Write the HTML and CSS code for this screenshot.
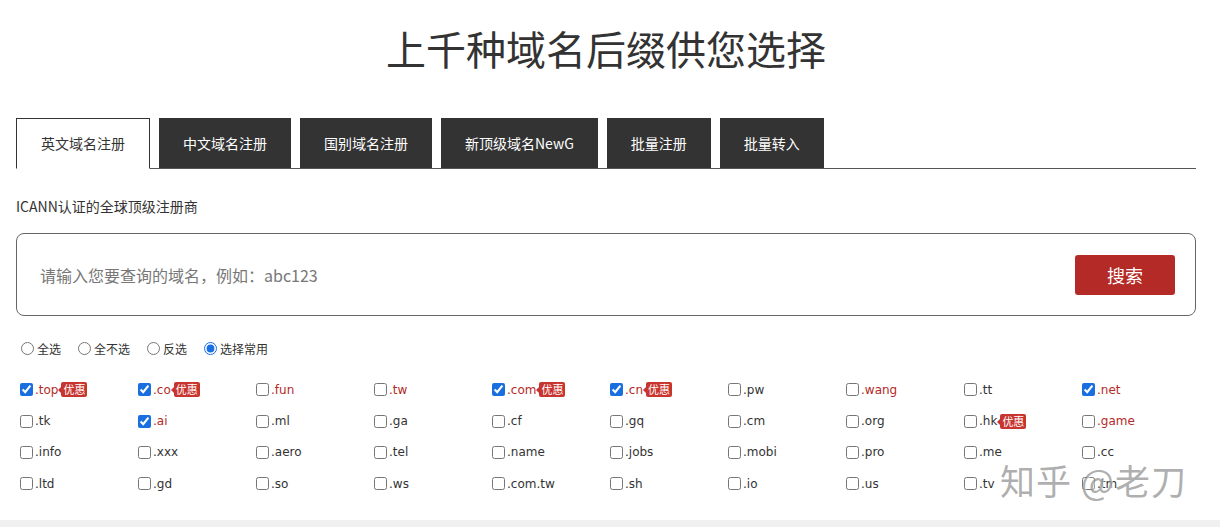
FILE: index.html
```html
<!DOCTYPE html>
<html>

<head>
    <title>域名注册</title>
    <link rel="stylesheet" href="styles.css">
</head>

<body>
    <div class="page">
        <h1 class="title">上千种域名后缀供您选择</h1>

        <ul class="tabs">
            <li class="tab active">英文域名注册</li>
            <li class="tab">中文域名注册</li>
            <li class="tab">国别域名注册</li>
            <li class="tab">新顶级域名NewG</li>
            <li class="tab">批量注册</li>
            <li class="tab">批量转入</li>
        </ul>

        <p class="note">ICANN认证的全球顶级注册商</p>

        <div class="search">
            <input type="text" class="search-input" placeholder="请输入您要查询的域名，例如：abc123">
            <button class="search-btn">搜索</button>
        </div>

        <div class="radios">
            <label><input type="radio" name="pick">全选</label>
            <label><input type="radio" name="pick">全不选</label>
            <label><input type="radio" name="pick">反选</label>
            <label><input type="radio" name="pick" checked>选择常用</label>
        </div>

        <div class="domains">
            <label class="hot"><input type="checkbox" checked>.top<span class="tag">优惠</span></label>
            <label class="hot"><input type="checkbox" checked>.co<span class="tag">优惠</span></label>
            <label class="hot"><input type="checkbox">.fun</label>
            <label class="hot"><input type="checkbox">.tw</label>
            <label class="hot"><input type="checkbox" checked>.com<span class="tag">优惠</span></label>
            <label class="hot"><input type="checkbox" checked>.cn<span class="tag">优惠</span></label>
            <label><input type="checkbox">.pw</label>
            <label class="hot"><input type="checkbox">.wang</label>
            <label><input type="checkbox">.tt</label>
            <label class="hot"><input type="checkbox" checked>.net</label>

            <label><input type="checkbox">.tk</label>
            <label class="hot"><input type="checkbox" checked>.ai</label>
            <label><input type="checkbox">.ml</label>
            <label><input type="checkbox">.ga</label>
            <label><input type="checkbox">.cf</label>
            <label><input type="checkbox">.gq</label>
            <label><input type="checkbox">.cm</label>
            <label><input type="checkbox">.org</label>
            <label><input type="checkbox">.hk<span class="tag">优惠</span></label>
            <label class="hot"><input type="checkbox">.game</label>

            <label><input type="checkbox">.info</label>
            <label><input type="checkbox">.xxx</label>
            <label><input type="checkbox">.aero</label>
            <label><input type="checkbox">.tel</label>
            <label><input type="checkbox">.name</label>
            <label><input type="checkbox">.jobs</label>
            <label><input type="checkbox">.mobi</label>
            <label><input type="checkbox">.pro</label>
            <label><input type="checkbox">.me</label>
            <label><input type="checkbox">.cc</label>

            <label><input type="checkbox">.ltd</label>
            <label><input type="checkbox">.gd</label>
            <label><input type="checkbox">.so</label>
            <label><input type="checkbox">.ws</label>
            <label><input type="checkbox">.com.tw</label>
            <label><input type="checkbox">.sh</label>
            <label><input type="checkbox">.io</label>
            <label><input type="checkbox">.us</label>
            <label><input type="checkbox">.tv</label>
            <label><input type="checkbox">.tm</label>
        </div>
    </div>

    <div class="footer-strip"></div>

    <div class="watermark">知乎 @老刀</div>
</body>

</html>
```

FILE: styles.css
```css
body {
    margin: 0;
    background: #fff;
    color: #333;
    font-family: "DejaVu Sans", "Noto Sans CJK SC", sans-serif;
}

.page {
    width: 1180px;
    margin-left: 16px;
    padding-bottom: 20px;
}

.title {
    margin: 20px 0 0;
    text-align: center;
    font-family: "Noto Sans CJK SC", sans-serif;
    font-size: 40px;
    font-weight: normal;
    line-height: 56px;
    color: #333;
}

.tabs {
    list-style: none;
    margin: 42px 0 0;
    padding: 0;
    display: flex;
    gap: 9px;
    border-bottom: 1px solid #555;
}

.tab {
    height: 50px;
    line-height: 50px;
    padding: 0 24px;
    background: #333;
    color: #fff;
    font-family: "Noto Sans CJK SC", sans-serif;
    font-size: 14px;
    cursor: pointer;
}

.tab.active {
    background: #fff;
    color: #333;
    border: 1px solid #333;
    border-bottom: 1px solid #fff;
    height: 49px;
    line-height: 49px;
    margin-bottom: -1px;
}

.note {
    margin: 27px 0 0;
    font-family: "Noto Sans CJK SC", sans-serif;
    font-size: 14px;
    line-height: 20px;
}

.search {
    margin-top: 17px;
    height: 81px;
    border: 1px solid #666;
    border-radius: 8px;
    display: flex;
    align-items: center;
    padding: 0 20px 0 23px;
}

.search-input {
    flex: 1;
    border: none;
    outline: none;
    font-family: "Noto Sans CJK SC", sans-serif;
    font-size: 16px;
    color: #333;
    padding: 0;
}

.search-input::placeholder {
    color: #777;
}

.search-btn {
    width: 100px;
    height: 40px;
    border: none;
    border-radius: 3px;
    background: #b42a26;
    color: #fff;
    font-family: "Noto Sans CJK SC", sans-serif;
    font-size: 18px;
    cursor: pointer;
}

.radios {
    margin-top: 22px;
    height: 20px;
    display: flex;
    align-items: center;
    gap: 12px;
    font-family: "Noto Sans CJK SC", sans-serif;
    font-size: 12px;
}

.radios label {
    display: flex;
    align-items: center;
}

.radios input {
    margin: 0 3px 0 5px;
    width: 13px;
    height: 13px;
    accent-color: #1a6fe0;
}

.domains {
    margin-top: 16px;
    display: grid;
    grid-template-columns: repeat(10, 118px);
    grid-auto-rows: 31.4px;
    font-size: 12px;
    color: #333;
}

.domains label {
    display: flex;
    align-items: center;
    white-space: nowrap;
}

.domains input {
    margin: 0 2px 0 4px;
    width: 13px;
    height: 13px;
    accent-color: #1a6fe0;
}

.domains .hot {
    color: #b42a26;
}

.tag {
    position: relative;
    margin-left: 3px;
    padding: 0 2px;
    height: 15px;
    line-height: 15px;
    border-radius: 2px;
    background: #c8352f;
    color: #fff;
    font-family: "Noto Sans CJK SC", sans-serif;
    font-size: 11px;
}

.tag::before {
    content: "";
    position: absolute;
    left: -3px;
    top: 5px;
    border-top: 3px solid transparent;
    border-bottom: 3px solid transparent;
    border-right: 3px solid #c8352f;
}

.footer-strip {
    height: 10px;
    background: #f0f0f0;
}

.watermark {
    position: absolute;
    left: 1000px;
    top: 454px;
    font-family: "Noto Sans CJK SC", sans-serif;
    font-size: 35px;
    color: rgba(140, 140, 140, 0.7);
    text-shadow: 1px 1px 1px rgba(255, 255, 255, 0.6);
    letter-spacing: 1px;
    pointer-events: none;
}
```
